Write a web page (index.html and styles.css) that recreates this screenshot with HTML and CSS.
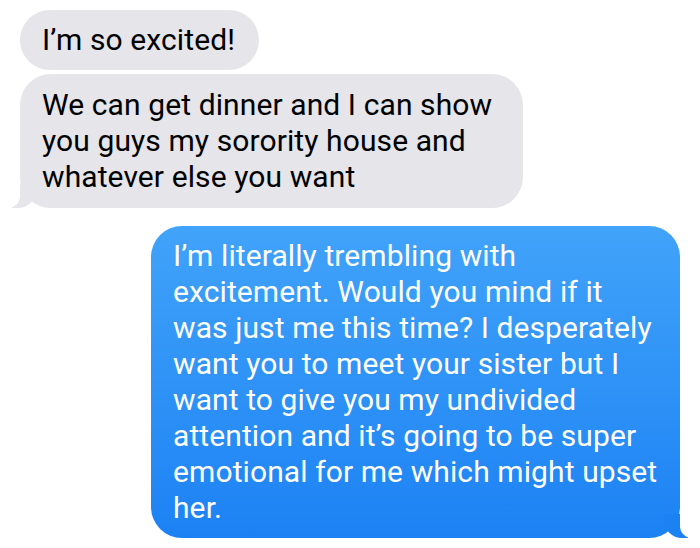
FILE: index.html
```html
<!DOCTYPE html>
<html lang="en">
<head>
  <meta charset="UTF-8" />
  <meta name="viewport" content="width=device-width, initial-scale=1.0"/>
  <title>Messages</title>
  <link rel="stylesheet" href="styles.css">
</head>
<body>

<div class="thread">
  <div class="bubble them">I’m so excited!</div>
  <div class="bubble them tail">We can get dinner and I can show you guys my sorority house and whatever else you want</div>

  <div class="bubble me tail">I’m literally trembling with excitement. Would you mind if it was just me this time? I desperately want you to meet your sister but I want to give you my undivided attention and it’s going to be super emotional for me which might upset her.</div>
</div>

</body>
</html>
```

FILE: styles.css
```css
body {
  margin: 0;
  background: #ffffff;
  font-family: Roboto, "Liberation Sans", sans-serif;
}

.thread {
  display: flex;
  flex-direction: column;
  padding: 10px 20px;
}

.bubble {
  position: relative;
  font-size: 30px;
  letter-spacing: 0.1px;
  line-height: 36px;
  padding: 12px 24px 12px 22px;
  border-radius: 31px;
  width: fit-content;
}

.them {
  align-self: flex-start;
  background: #e5e5ea;
  color: #000;
  max-width: 457px;
  margin-bottom: 4px;
}

.them.tail {
  padding-top: 13px;
  padding-bottom: 13px;
}

.me {
  align-self: flex-end;
  background: linear-gradient(to bottom, #41a3f9, #1c82f4);
  color: #fff;
  width: 491px;
  padding-right: 16px;
  margin-top: 14px;
}

/* tails */
.tail::before,
.tail::after {
  content: "";
  position: absolute;
  bottom: 0;
  height: 24px;
}

.them.tail::before {
  left: -8px;
  width: 24px;
  background: #e5e5ea;
  border-bottom-right-radius: 18px;
}

.them.tail::after {
  left: -14px;
  width: 14px;
  background: #fff;
  border-bottom-right-radius: 12px;
}

.me.tail::before {
  right: -8px;
  width: 24px;
  background: #1c82f4;
  border-bottom-left-radius: 18px;
}

.me.tail::after {
  right: -14px;
  width: 14px;
  background: #fff;
  border-bottom-left-radius: 12px;
}
```
